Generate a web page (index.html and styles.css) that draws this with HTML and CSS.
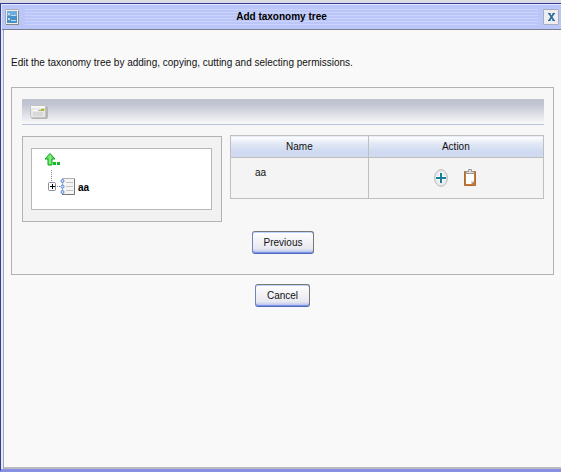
FILE: index.html
```html
<!DOCTYPE html>
<html lang="en">
<head>
<meta charset="utf-8">
<title>Add taxonomy tree</title>
<link rel="stylesheet" href="styles.css">
</head>
<body>
<div class="window">
  <header class="titlebar">
    <svg class="app-icon" width="15" height="17" viewBox="0 0 15 17" aria-hidden="true">
      <rect x=".5" y=".5" width="13" height="15" rx="1" fill="#f0efea" stroke="#a9a9ae"/>
      <path d="M1 15.500h12.500V2" fill="none" stroke="#898983"/>
      <rect x="2" y="2" width="10" height="12" fill="#4a91c9"/>
      <path d="M2 2h10v5H2z" fill="#6badde"/>
      <path d="M3 4h2v2H3zM3 9h2v2H3zM6 6h5v1H6zM6 11h5v1H6z" fill="#b9dcf3"/>
    </svg>
    <div class="grip"><h1>Add taxonomy tree</h1></div>
    <button class="close" type="button" aria-label="Close">
      <svg width="7" height="8" viewBox="0 0 7 8"><path d="M0 .5h2.500M4.500 .5H7M0 7.500h2.500M4.500 7.500H7" stroke="#286b9f"/><path d="M1.200 .5l4.600 7M5.800 .5l-4.600 7" stroke="#286b9f" stroke-width="1.600"/></svg>
    </button>
  </header>
  <main class="content">
    <p class="intro">Edit the taxonomy tree by adding, copying, cutting and selecting permissions.</p>
    <section class="panel">
      <div class="toolbar">
        <button class="icon-button" type="button" aria-label="Paste">
          <svg width="18" height="14" viewBox="0 0 18 14">
            <rect x="1" y="1" width="17" height="13" rx="2" fill="#b5b5b5"/>
            <rect x=".5" y=".5" width="15" height="12" rx="1" fill="#e8e8e7" stroke="#c2c2c2"/>
            <path d="M1 1h14v2H1z" fill="#f8f8f8"/>
            <path d="M3 5.500h8" stroke="#fff"/><path d="M8 5.500h4" stroke="#b5b5b5"/>
            <path d="M3 7h10v4H3z" fill="#d8d8d8"/>
            <path d="M11 5h2l1-1" fill="none" stroke="#a6b728" stroke-width="2"/>
          </svg>
        </button>
      </div>
      <div class="columns">
        <div class="tree-frame">
          <div class="tree">
            <svg width="32" height="43" viewBox="0 0 32 43" aria-hidden="true">
              <path d="M6 .5l5 5.500h-3v6H4v-6H1z" fill="#65df65" stroke="#0aa51f"/>
              <path d="M6 2v9" stroke="#a3f39d"/>
              <path d="M9 9h3v3H9zM13 9h3v3h-3z" fill="#12b928"/>
              <path d="M7.500 17v12M13 33.500h5" stroke="#85858c" stroke-dasharray="1 1"/>
              <rect x="4.500" y="29.500" width="7" height="8" rx="1" fill="#fff" stroke="#8b8b99"/>
              <path d="M6 33.500h5M8.500 31v5" stroke="#000"/>
              <path d="M18.500 25.500h12v16h-12z" fill="#f4f4f4" stroke="#b1b1b1"/>
              <path d="M18 41.500h12.500V26" fill="none" stroke="#77777a"/>
              <path d="M22 29.500h7M22 33.500h7M22 37.500h7" stroke="#c2c2c7"/>
              <g fill="#d9e7ff" stroke="#4c82d5"><circle cx="18.500" cy="28" r="1.500"/><circle cx="18.500" cy="33.500" r="1.500"/><circle cx="18.500" cy="39" r="1.500"/></g>
            </svg>
            <a class="tree-label" href="#aa">aa</a>
          </div>
        </div>
        <table class="grid">
          <thead><tr><th scope="col">Name</th><th scope="col">Action</th></tr></thead>
          <tbody><tr>
            <td class="name">aa</td>
            <td><div class="actions">
              <button class="icon-button" type="button" aria-label="Add">
                <svg width="14" height="18" viewBox="0 0 14 18"><ellipse cx="7" cy="9" rx="6.400" ry="8.300" fill="#eaeaea" stroke="#b7b7b7"/><path d="M2 9h10M7 4v10" stroke="#fff" stroke-width="4"/><path d="M2 9h10M7 4v10" stroke="#167f9e" stroke-width="2"/></svg>
              </button>
              <button class="icon-button" type="button" aria-label="Copy">
                <svg width="14" height="18" viewBox="0 0 14 18"><path d="M1.500 2.500h11v14h-11z" fill="#c47b3b" stroke="#b06a30"/><path d="M3 3h8v9l-3 3H3z" fill="#fff"/><path d="M8 15v-3h3z" fill="#d5d5d5"/><path d="M3 4.500V2.500h2.500V.5h3v2H11v2z" fill="#ddd" stroke="#999"/></svg>
              </button>
            </div></td>
          </tr></tbody>
        </table>
      </div>
      <button class="button" type="button">Previous</button>
    </section>
    <button class="button" type="button">Cancel</button>
  </main>
</div>
</body>
</html>
```
FILE: styles.css
```css
* { box-sizing: border-box; }
body {
  margin: 0;
  padding-top: 3px;
  min-height: 100vh;
  display: flex;
  background: #dcdce5;
  color: #111;
  font: 10px/14px "Liberation Sans Narrow", "Liberation Sans", Arial, sans-serif;
}
button { padding: 0; font: inherit; color: inherit; }
.window {
  flex: 1;
  display: flex;
  flex-direction: column;
  padding: 1px 0 0 1px;
  border-top: 1px solid #333d91;
  border-left: 1px solid #333d91;
  border-bottom: 3px solid #8790e2;
  background: #e4e7fc;
}
.titlebar {
  display: flex;
  align-items: center;
  height: 25px;
  padding: 0 2px 0 3px;
  gap: 5px;
  border-bottom: 1px solid #7c7f8b;
  background: #bac5f8;
}
.grip {
  flex: 1;
  height: 16px;
  background: repeating-linear-gradient(#ccd4fc 0 1px, #bac5f8 1px 3px);
}
.titlebar h1 { margin: 0; font-size: 10px; line-height: 16px; text-align: center; color: #000; }
.close {
  display: flex;
  align-items: center;
  justify-content: center;
  width: 16px;
  height: 16px;
  border: 1px solid #a9adbd;
  border-radius: 1px;
  background: #eeeef0;
}
.content {
  flex: 1;
  display: flex;
  flex-direction: column;
  align-items: center;
  margin-left: 1px;
  padding: 26px 7px 8px;
  border-left: 1px solid #a5a5b0;
  border-bottom: 2px solid #b9b9c1;
  background: #f9f9f9;
}
.intro { align-self: stretch; margin: 0 0 17px; }
.panel {
  align-self: stretch;
  display: flex;
  flex-direction: column;
  align-items: center;
  margin-bottom: 9px;
  padding: 11px 9px 20px 10px;
  border: 1px solid #b2b2b2;
  background: #f7f7f7;
}
.toolbar {
  align-self: stretch;
  display: flex;
  align-items: center;
  height: 26px;
  padding-left: 8px;
  border-bottom: 1px solid #b9c0dc;
  background: linear-gradient(#c0c4d1 20%, #fafafa);
}
.icon-button { display: block; border: 0; background: none; }
.icon-button svg { display: block; }
.columns {
  align-self: stretch;
  display: grid;
  grid-template-columns: 200fr 314fr;
  align-items: start;
  gap: 8px;
  margin: 10px 0 9px;
}
.tree-frame {
  margin-top: 1px;
  padding: 11px 9px 11px 8px;
  border: 1px solid #b3b3b3;
  background: #f2f2f2;
}
.tree {
  display: flex;
  align-items: flex-end;
  gap: 2px;
  height: 62px;
  padding: 4px 12px 13px;
  border: 1px solid #b8b8b8;
  background: #fff;
}
.tree-label { color: #000; font-weight: bold; line-height: 16px; text-decoration: none; }
.grid {
  width: 100%;
  border-collapse: collapse;
  table-layout: fixed;
  background: #f4f4f4;
}
.grid th, .grid td { border: 1px solid #bfbfbf; padding: 0; }
.grid th {
  height: 22px;
  font-weight: normal;
  background: linear-gradient(#fff, #e1e8f5 35%, #d0dbf1 70%);
}
.grid th:first-child { width: 44%; }
.grid td { height: 41px; }
.grid .name { padding: 8px 24px; vertical-align: top; }
.actions { display: flex; justify-content: center; gap: 15px; }
.button {
  height: 23px;
  padding: 0 11px;
  border: 1px solid #777;
  border-left-color: #7183bd;
  border-bottom-color: #5868b4;
  border-radius: 3px;
  background: linear-gradient(#fff, #e7e7ef 80%, #acbbed);
  box-shadow: inset 0 1px #bdd5ff, inset 0 -1px #7594ec;
}
```
